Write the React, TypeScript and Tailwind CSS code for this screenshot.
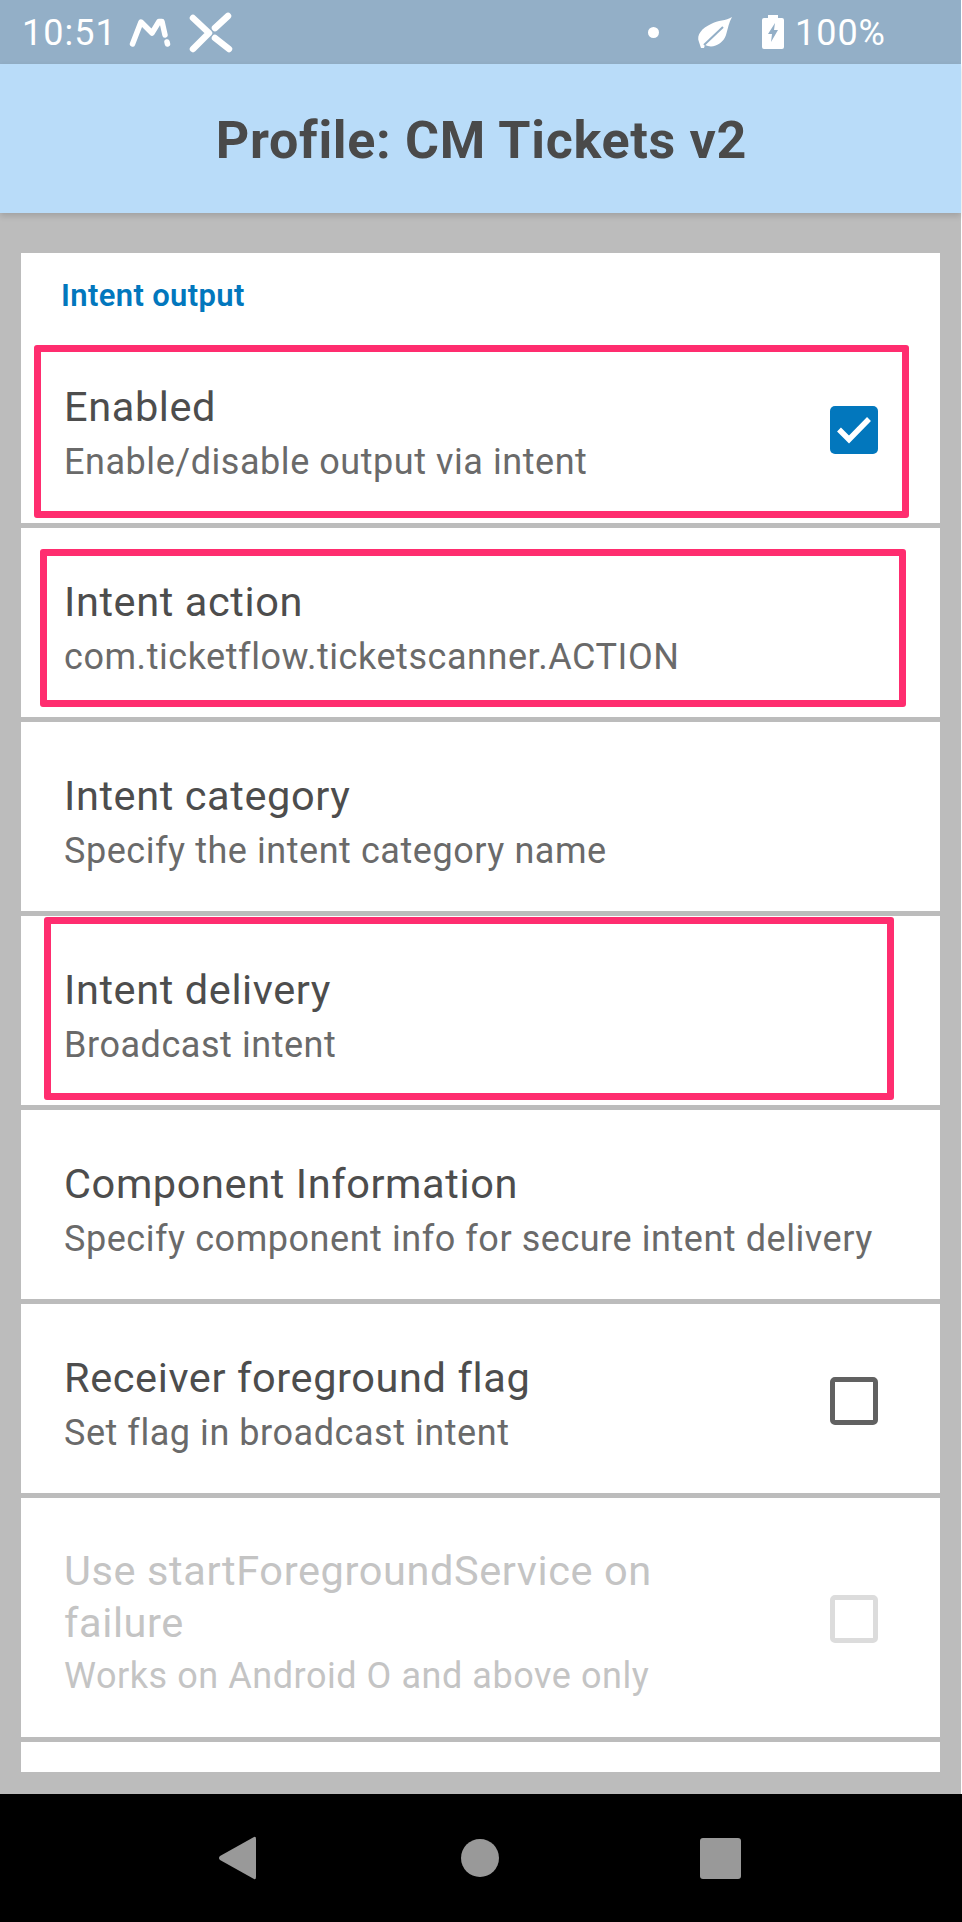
import React from "react";

const FONT = "font-['Roboto',sans-serif]";

type Row = {
  title: string;
  sub: string;
  check?: "on" | "off" | "disabled";
};

const rows: Row[] = [
  { title: "Intent action", sub: "com.ticketflow.ticketscanner.ACTION" },
  { title: "Intent category", sub: "Specify the intent category name" },
  { title: "Intent delivery", sub: "Broadcast intent" },
  { title: "Component Information", sub: "Specify component info for secure intent delivery" },
  { title: "Receiver foreground flag", sub: "Set flag in broadcast intent", check: "off" },
];

const Checkbox = ({ state }: { state: "on" | "off" | "disabled" }) => {
  if (state === "on") {
    return (
      <div className="w-12 h-12 shrink-0 rounded-[5px] bg-[#0277bd] flex items-center justify-center">
        <svg width="36" height="30" viewBox="0 0 36 30" fill="none">
          <path d="M3 14.5 L13 24.5 L33 4" stroke="white" strokeWidth="5.5" />
        </svg>
      </div>
    );
  }
  return (
    <div
      className={
        state === "off"
          ? "w-12 h-12 shrink-0 rounded-[5px] border-[5px] border-[#616161]"
          : "w-12 h-12 shrink-0 rounded-[5px] border-[5px] border-[#dcdcdc]"
      }
    />
  );
};

const Highlight = ({ className }: { className: string }) => (
  <div className={"absolute border-[7px] border-[#ff2d6f] rounded-[3px] pointer-events-none " + className} />
);

const RowItem = ({ row }: { row: Row }) => (
  <div className="h-[189px] shrink-0 bg-white pl-[43px] pr-[62px] flex items-center justify-between">
    <div className="pt-[11px]">
      <div className="text-[41.5px] leading-[48px] tracking-[0.6px] text-[#4d4d4d]">{row.title}</div>
      <div className="text-[36px] leading-[42px] tracking-[0.55px] mt-[10px] text-[#6a6a6a]">{row.sub}</div>
    </div>
    {row.check && (
      <div className="mt-[4px]">
        <Checkbox state={row.check} />
      </div>
    )}
  </div>
);

export default function App() {
  return (
    <div className={"relative w-[962px] h-[1922px] flex flex-col overflow-hidden bg-white " + FONT}>
      {/* status bar */}
      <div className="h-16 shrink-0 mr-px bg-[#93afc7] flex items-center pl-[22px] pr-[75px] text-white text-[36px] tracking-[1px]">
        <span className="pt-[1px]">10:51</span>
        <svg className="ml-[12px]" width="42" height="34" viewBox="0 0 42 34" fill="none" stroke="white" strokeLinecap="round" strokeLinejoin="round">
          <path d="M3.5 29 L12 7 L23 18 L30 6.5 L33 6.5 L36 20" strokeWidth="5.5" />
          <path d="M38 27 L38.5 29" strokeWidth="5.5" />
        </svg>
        <svg className="ml-[16px]" width="48" height="42" viewBox="0 0 48 42" fill="none" stroke="white" strokeLinecap="round" strokeLinejoin="round" strokeWidth="6.5">
          <path d="M6 7 L22 22 L6 38" />
          <path d="M41 5 L28 17" />
          <path d="M28 27 L42 38" />
        </svg>
        <div className="ml-auto w-[11px] h-[11px] rounded-full bg-white" />
        <svg className="ml-[37px]" width="38" height="34" viewBox="0 0 38 34" fill="none">
          <path d="M36 2 C30 6 22 5 15 9 C6 13 0 20 3 27 L5 33 L8 33 L9 30 C17 34 27 29 30 20 C32 13 33 7 36 2 Z" fill="white" />
          <path d="M8 30 L27 12" stroke="#93afc7" strokeWidth="2" />
        </svg>
        <svg className="ml-[28px]" width="22" height="34" viewBox="0 0 22 34" fill="white">
          <path fillRule="evenodd" d="M6 0 H16 V3 H20 Q22 3 22 5 V32 Q22 34 20 34 H2 Q0 34 0 32 V5 Q0 3 2 3 H6 Z M13 8 L6 19 H10 L9 27 L16 15 H12 Z" />
        </svg>
        <span className="ml-[11px] pt-[1px]">100%</span>
      </div>

      {/* app bar */}
      <div className="relative z-10 h-[149px] shrink-0 mr-px pt-[4px] pl-[2px] bg-[#b9dcf9] shadow-[0_3px_6px_rgba(0,0,0,0.14)] flex items-center justify-center">
        <span className="text-[52px] font-bold tracking-[0.7px] text-[#4a4a4a]">Profile: CM Tickets v2</span>
      </div>

      {/* settings list */}
      <div className="h-[1581px] shrink-0 mr-px bg-[#bcbcbc] pt-10 px-[21px] overflow-hidden">
        <div className="h-[1519px] flex flex-col gap-[5px] overflow-hidden">
          <div className="h-[270px] shrink-0 bg-white pl-[43px] pr-[62px] flex flex-col">
            <div className="pt-[23px] -ml-[3px] text-[31px] leading-[40px] font-semibold tracking-[0.35px] text-[#0277bd]">Intent output</div>
            <div className="flex-1 flex items-center justify-between pt-[21px]">
              <div className="pt-[6px]">
                <div className="text-[41.5px] leading-[48px] tracking-[0.6px] text-[#4d4d4d]">Enabled</div>
                <div className="text-[36px] leading-[42px] tracking-[0.55px] mt-[10px] text-[#6a6a6a]">Enable/disable output via intent</div>
              </div>
              <Checkbox state="on" />
            </div>
          </div>
          {rows.map((row) => (
            <RowItem key={row.title} row={row} />
          ))}
          <div className="h-[239px] shrink-0 bg-white pl-[43px] pr-[62px] flex items-center justify-between">
            <div className="w-[640px] pt-[6px]">
              <div className="text-[41.5px] leading-[52px] tracking-[0.6px] text-[#c4c4c4]">Use startForegroundService on failure</div>
              <div className="text-[36px] leading-[42px] tracking-[0.55px] mt-[6px] text-[#c4c4c4]">Works on Android O and above only</div>
            </div>
            <div className="mt-[2px]">
              <Checkbox state="disabled" />
            </div>
          </div>
          <div className="flex-1 bg-white" />
        </div>
      </div>

      {/* nav bar */}
      <div className="flex-1 bg-black flex items-center">
        <svg className="ml-[218px]" width="39" height="44" viewBox="0 0 39 44" fill="#999999">
          <path d="M36 1 Q38 0 38 3 V41 Q38 44 36 43 L2 24 Q0 22 2 20 Z" />
        </svg>
        <div className="ml-[204px] w-[38px] h-[38px] rounded-full bg-[#999999]" />
        <div className="ml-[201px] w-[41px] h-[41px] rounded-[3px] bg-[#999999]" />
      </div>

      {/* pink annotation boxes */}
      <Highlight className="left-[34px] top-[345px] w-[875px] h-[173px]" />
      <Highlight className="left-[40px] top-[549px] w-[866px] h-[158px]" />
      <Highlight className="left-[44px] top-[917px] w-[850px] h-[183px]" />
    </div>
  );
}
